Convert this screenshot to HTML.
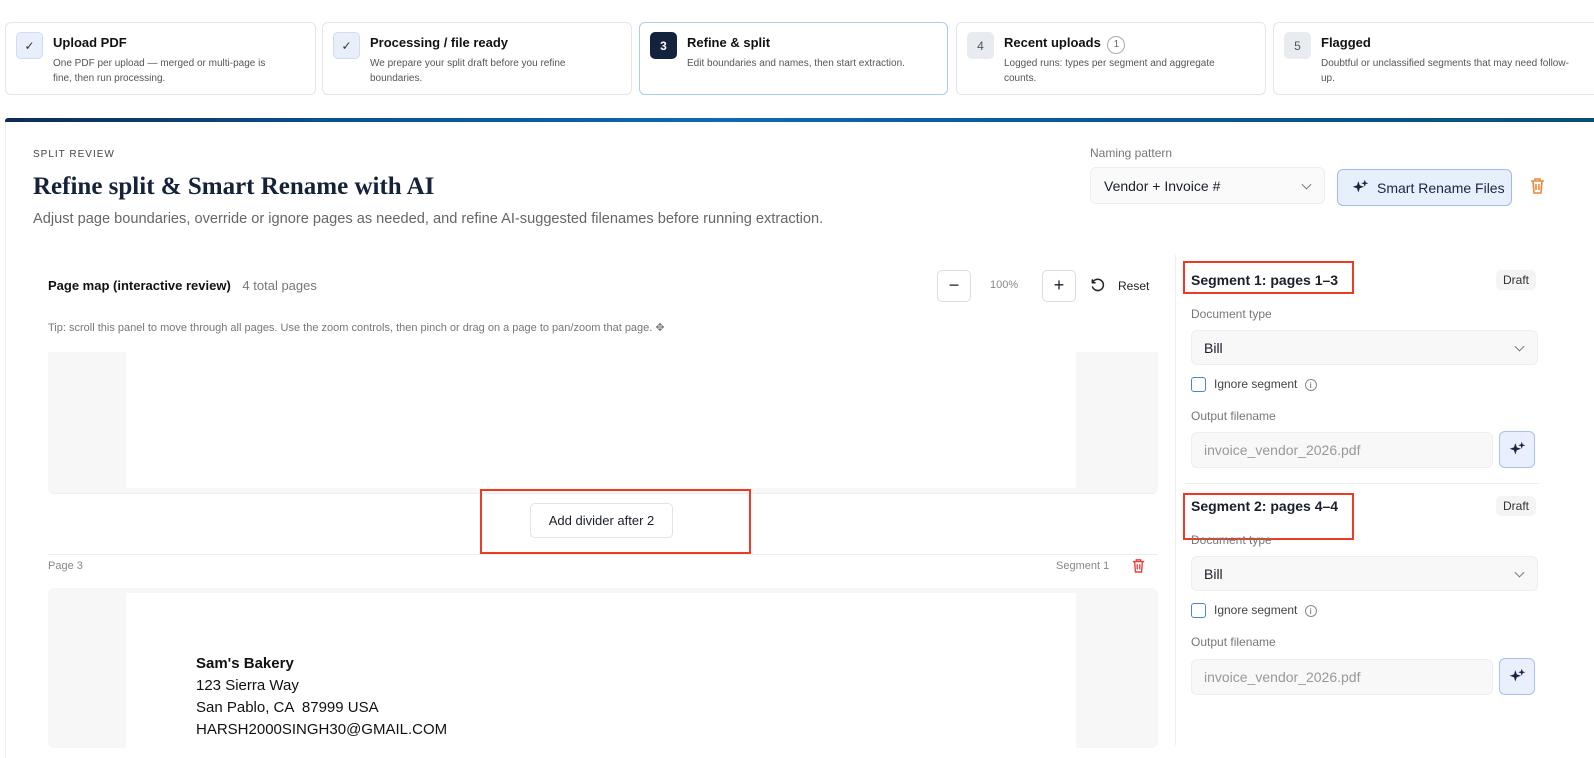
<!DOCTYPE html>
<html><head><meta charset="utf-8"><style>
*{box-sizing:border-box;margin:0;padding:0}
body{width:1594px;height:745px;overflow:hidden;background:#fff;font-family:"Liberation Sans",sans-serif;color:#1a1f2b;position:relative}
.a{position:absolute}
.card{position:absolute;top:22px;height:73px;border:1px solid #e3e5e8;border-radius:6px;background:#fff}
.card.act{border-color:#a9cdee}
.ic{position:absolute;left:10px;top:9px;width:27px;height:27px;border-radius:5px;background:#e8effb;border:1px solid #cfdcf3;font-size:12px;display:flex;align-items:center;justify-content:center;color:#333}
.ic.g{background:#e8ebf0;border:none;color:#555}
.ic.d{background:#13233d;border:none;color:#fff;font-weight:bold}
.ct{position:absolute;left:47px;top:12px;font-size:13px;font-weight:bold;color:#111}
.cd{position:absolute;left:47px;top:33px;font-size:10px;line-height:15px;color:#555;width:232px}
.lbl{font-size:12px;color:#777}
.sel{position:absolute;border:1px solid #eceef0;background:#f8f8f8;border-radius:6px;font-size:14px;padding-left:13px;display:flex;align-items:center}
.chev{position:absolute;right:14px;top:50%;width:7px;height:7px;border-right:1.5px solid #777;border-bottom:1.5px solid #777;transform:translateY(-70%) rotate(45deg)}
.rb{position:absolute;border:2px solid #ee3a22}
.draft{position:absolute;background:#f4f4f4;border-radius:5px;font-size:12px;color:#333;padding:3px 7px}
.cb{position:absolute;width:15px;height:15px;border:1.5px solid #4a84d4;border-radius:3px}
.sp{position:absolute;width:36px;height:37px;border:1px solid #a8c2ee;background:#e9effc;border-radius:6px;display:flex;align-items:center;justify-content:center}
</style></head><body>

<div class="card" style="left:5px;width:311px"><div class="ic">✓</div><div class="ct">Upload PDF</div><div class="cd">One PDF per upload — merged or multi-page is fine, then run processing.</div></div>
<div class="card" style="left:322px;width:310px"><div class="ic">✓</div><div class="ct">Processing / file ready</div><div class="cd" style="width:215px">We prepare your split draft before you refine boundaries.</div></div>
<div class="card act" style="left:639px;width:309px"><div class="ic d">3</div><div class="ct">Refine &amp; split</div><div class="cd">Edit boundaries and names, then start extraction.</div></div>
<div class="card" style="left:956px;width:310px"><div class="ic g">4</div><div class="ct">Recent uploads <span style="display:inline-block;width:18px;height:18px;border:1px solid #aaa;border-radius:50%;font-size:10px;font-weight:normal;text-align:center;line-height:16px;color:#666;margin-left:3px">1</span></div><div class="cd" style="width:225px">Logged runs: types per segment and aggregate counts.</div></div>
<div class="card" style="left:1273px;width:330px"><div class="ic g">5</div><div class="ct">Flagged</div><div class="cd" style="width:250px">Doubtful or unclassified segments that may need follow-up.</div></div>

<div class="a" style="left:5px;top:118px;width:1600px;height:640px;border-left:1px solid #eee;border-top-left-radius:4px"></div>
<div class="a" style="left:5px;top:118px;width:1590px;height:4px;background:linear-gradient(90deg,#0d2c55,#0a4f8c 20%,#0e68b4 45%,#0b5595 70%,#0a4f7a);border-top-left-radius:3px"></div>

<div class="a" style="left:33px;top:149px;font-size:10px;letter-spacing:1px;color:#444">SPLIT REVIEW</div>
<div class="a" style="left:33px;top:173px;font-family:'Liberation Serif',serif;font-weight:bold;font-size:25px;color:#15223a">Refine split &amp; Smart Rename with AI</div>
<div class="a" style="left:33px;top:211px;font-size:14.6px;color:#666">Adjust page boundaries, override or ignore pages as needed, and refine AI-suggested filenames before running extraction.</div>

<div class="a lbl" style="left:1090px;top:146px">Naming pattern</div>
<div class="sel" style="left:1090px;top:167px;width:235px;height:37px;background:#fafafa">Vendor + Invoice #<span class="chev"></span></div>
<div class="a" style="left:1337px;top:169px;width:175px;height:37px;border:1px solid #9fbbec;background:#e8effc;border-radius:6px;font-size:14px;display:flex;align-items:center;padding-left:14px;color:#1a2540">
<svg width="17" height="17" viewBox="0 0 24 24" fill="#1a2540" style="margin-right:8px"><path d="M9 3l2 6 6 2-6 2-2 6-2-6-6-2 6-2z"/><path d="M18 1l1.3 3.7L23 6l-3.7 1.3L18 11l-1.3-3.7L13 6l3.7-1.3z"/></svg>Smart Rename Files</div>
<svg class="a" style="left:1530px;top:177px" width="15" height="17" viewBox="0 0 15 17" fill="none" stroke="#ec8a3b" stroke-width="1.6"><path d="M1 4h13M5 4V2h5v2M3 4l1 12h7l1-12M6 7v6M9 7v6"/></svg>

<div class="a" style="left:48px;top:278px;font-size:13px;font-weight:bold;color:#111">Page map (interactive review) <span style="font-weight:normal;color:#777;margin-left:8px">4 total pages</span></div>
<div class="a" style="left:937px;top:270px;width:34px;height:32px;border:1px solid #ddd;border-radius:5px;text-align:center;line-height:28px;font-size:18px">−</div>
<div class="a" style="left:990px;top:279px;font-size:11px;color:#888">100%</div>
<div class="a" style="left:1042px;top:270px;width:34px;height:32px;border:1px solid #ddd;border-radius:5px;text-align:center;line-height:28px;font-size:18px">+</div>
<svg class="a" style="left:1090px;top:278px" width="15" height="15" viewBox="0 0 16 16" fill="none" stroke="#222" stroke-width="1.6"><path d="M3 4.5A6 6 0 1 1 2.5 9"/><path d="M2.5 1.5v3.5H6"/></svg>
<div class="a" style="left:1118px;top:279px;font-size:12px;color:#222">Reset</div>
<div class="a" style="left:48px;top:321px;font-size:11px;color:#777">Tip: scroll this panel to move through all pages. Use the zoom controls, then pinch or drag on a page to pan/zoom that page. ✥</div>

<div class="a" style="left:48px;top:352px;width:1110px;height:142px;background:#f7f7f7;border-bottom:1px solid #eee;border-radius:0 0 6px 6px"></div>
<div class="a" style="left:126px;top:352px;width:950px;height:136px;background:#fff"></div>
<div class="a" style="left:530px;top:503px;width:143px;height:35px;border:1px solid #e3e3e3;border-radius:5px;background:#fff;font-size:13px;text-align:center;line-height:33px">Add divider after 2</div>
<div class="rb" style="left:480px;top:489px;width:271px;height:65px"></div>
<div class="a" style="left:48px;top:554px;width:1110px;height:1px;background:#eee"></div>
<div class="a" style="left:48px;top:560px;font-size:11px;color:#888">Page 3</div>
<div class="a" style="left:1056px;top:560px;font-size:11px;color:#888">Segment 1</div>
<svg class="a" style="left:1132px;top:558px" width="13" height="15" viewBox="0 0 15 17" fill="none" stroke="#e84040" stroke-width="1.6"><path d="M1 4h13M5 4V2h5v2M3 4l1 12h7l1-12M6 7v6M9 7v6"/></svg>

<div class="a" style="left:48px;top:588px;width:1110px;height:160px;background:#f7f7f7;border-radius:6px"></div>
<div class="a" style="left:126px;top:593px;width:950px;height:160px;background:#fff"></div>
<div class="a" style="left:196px;top:653px;font-size:15px;line-height:22px;color:#111;font-family:'Liberation Sans',Arial,sans-serif"><b>Sam's Bakery</b><br>123 Sierra Way<br>San Pablo, CA &nbsp;87999 USA<br>HARSH2000SINGH30@GMAIL.COM</div>

<div class="a" style="left:1175px;top:255px;width:1px;height:490px;background:#eee"></div>

<div class="a" style="left:1191px;top:272px;font-size:14px;font-weight:bold">Segment 1: pages 1–3</div>
<div class="rb" style="left:1183px;top:261px;width:171px;height:33px"></div>
<div class="draft" style="left:1496px;top:270px">Draft</div>
<div class="a lbl" style="left:1191px;top:307px">Document type</div>
<div class="sel" style="left:1191px;top:330px;width:347px;height:35px;padding-left:12px">Bill<span class="chev"></span></div>
<div class="cb" style="left:1191px;top:377px"></div>
<div class="a" style="left:1214px;top:377px;font-size:12px;color:#444">Ignore segment <span style="display:inline-block;width:12px;height:12px;border:1px solid #888;border-radius:50%;font-size:8px;text-align:center;line-height:11px;margin-left:4px">i</span></div>
<div class="a lbl" style="left:1191px;top:409px">Output filename</div>
<div class="sel" style="left:1191px;top:432px;width:302px;height:36px;color:#999;padding-left:12px">invoice_vendor_2026.pdf</div>
<div class="sp" style="left:1499px;top:431px"><svg width="17" height="17" viewBox="0 0 24 24" fill="#1a2540"><path d="M9 3l2 6 6 2-6 2-2 6-2-6-6-2 6-2z"/><path d="M18 1l1.3 3.7L23 6l-3.7 1.3L18 11l-1.3-3.7L13 6l3.7-1.3z"/></svg></div>

<div class="a" style="left:1185px;top:483px;width:354px;height:1px;background:#eee"></div>
<div class="a" style="left:1191px;top:498px;font-size:14px;font-weight:bold">Segment 2: pages 4–4</div>
<div class="rb" style="left:1183px;top:493px;width:171px;height:47px"></div>
<div class="draft" style="left:1496px;top:496px">Draft</div>
<div class="a lbl" style="left:1191px;top:533px">Document type</div>
<div class="sel" style="left:1191px;top:556px;width:347px;height:35px;padding-left:12px">Bill<span class="chev"></span></div>
<div class="cb" style="left:1191px;top:603px"></div>
<div class="a" style="left:1214px;top:603px;font-size:12px;color:#444">Ignore segment <span style="display:inline-block;width:12px;height:12px;border:1px solid #888;border-radius:50%;font-size:8px;text-align:center;line-height:11px;margin-left:4px">i</span></div>
<div class="a lbl" style="left:1191px;top:635px">Output filename</div>
<div class="sel" style="left:1191px;top:659px;width:302px;height:36px;color:#999;padding-left:12px">invoice_vendor_2026.pdf</div>
<div class="sp" style="left:1499px;top:658px"><svg width="17" height="17" viewBox="0 0 24 24" fill="#1a2540"><path d="M9 3l2 6 6 2-6 2-2 6-2-6-6-2 6-2z"/><path d="M18 1l1.3 3.7L23 6l-3.7 1.3L18 11l-1.3-3.7L13 6l3.7-1.3z"/></svg></div>
</body></html>
